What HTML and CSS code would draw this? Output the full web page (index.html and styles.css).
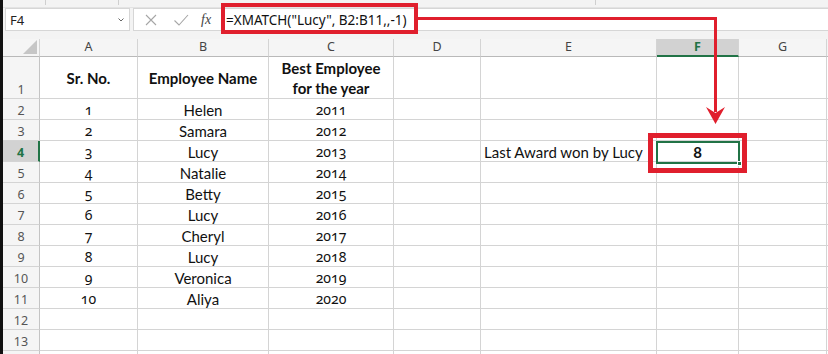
FILE: index.html
```html
<!DOCTYPE html>
<html>
<head>
<meta charset="utf-8">
<link rel="stylesheet" href="styles.css">
</head>
<body>
<div class="app">
  <div class="ribbon"><span class="rsep s1"></span><span class="rsep s2"></span><span class="rsep s3"></span></div>
  <div class="fbar">
    <div class="namebox"><span>F4</span>
      <svg class="chev" width="8" height="6" viewBox="0 0 8 6"><path d="M1.5 1.5 L4 4 L6.5 1.5" fill="none" stroke="#666" stroke-width="1"/></svg>
    </div>
    <div class="finput">
      <div class="fbtns">
        <svg width="14" height="14" viewBox="0 0 14 14"><path d="M2 2 L12 12 M12 2 L2 12" stroke="#a6a6a6" stroke-width="1.1"/></svg>
        <svg width="16" height="14" viewBox="0 0 16 14"><path d="M1.5 7.5 L6 12 L15 2" fill="none" stroke="#a6a6a6" stroke-width="1.1"/></svg>
        <span class="fx">fx</span>
      </div>
      <div class="ftext">=XMATCH("Lucy", B2:B11,,-1)</div>
    </div>
  </div>
  <div class="sheet">
    <div class="h corner"><svg width="14" height="14" viewBox="0 0 14 14"><path d="M14 0 L14 14 L0 14 Z" fill="#c6c6c6"/></svg></div>
    <div class="h">A</div><div class="h">B</div><div class="h">C</div><div class="h">D</div><div class="h">E</div><div class="h sel">F</div><div class="h">G</div><div class="h"></div>

    <div class="rh">1</div><div class="c b mid">Sr. No.</div><div class="c b mid">Employee Name</div><div class="c b mid wrap">Best Employee<br>for the year</div><div class="c"></div><div class="c"></div><div class="c"></div><div class="c"></div><div class="c"></div>

    <div class="rh">2</div><div class="c n">1</div><div class="c">Helen</div><div class="c n">2011</div><div class="c"></div><div class="c"></div><div class="c"></div><div class="c"></div><div class="c"></div>
    <div class="rh">3</div><div class="c n">2</div><div class="c">Samara</div><div class="c n">2012</div><div class="c"></div><div class="c"></div><div class="c"></div><div class="c"></div><div class="c"></div>
    <div class="rh rsel">4</div><div class="c n">3</div><div class="c">Lucy</div><div class="c n">2013</div><div class="c"></div><div class="c left">Last Award won by Lucy</div><div class="c b">8</div><div class="c"></div><div class="c"></div>
    <div class="rh">5</div><div class="c n">4</div><div class="c">Natalie</div><div class="c n">2014</div><div class="c"></div><div class="c"></div><div class="c"></div><div class="c"></div><div class="c"></div>
    <div class="rh">6</div><div class="c n">5</div><div class="c">Betty</div><div class="c n">2015</div><div class="c"></div><div class="c"></div><div class="c"></div><div class="c"></div><div class="c"></div>
    <div class="rh">7</div><div class="c n">6</div><div class="c">Lucy</div><div class="c n">2016</div><div class="c"></div><div class="c"></div><div class="c"></div><div class="c"></div><div class="c"></div>
    <div class="rh">8</div><div class="c n">7</div><div class="c">Cheryl</div><div class="c n">2017</div><div class="c"></div><div class="c"></div><div class="c"></div><div class="c"></div><div class="c"></div>
    <div class="rh">9</div><div class="c n">8</div><div class="c">Lucy</div><div class="c n">2018</div><div class="c"></div><div class="c"></div><div class="c"></div><div class="c"></div><div class="c"></div>
    <div class="rh">10</div><div class="c n">9</div><div class="c">Veronica</div><div class="c n">2019</div><div class="c"></div><div class="c"></div><div class="c"></div><div class="c"></div><div class="c"></div>
    <div class="rh">11</div><div class="c n">10</div><div class="c">Aliya</div><div class="c n">2020</div><div class="c"></div><div class="c"></div><div class="c"></div><div class="c"></div><div class="c"></div>
    <div class="rh">12</div><div class="c"></div><div class="c"></div><div class="c"></div><div class="c"></div><div class="c"></div><div class="c"></div><div class="c"></div><div class="c"></div>
    <div class="rh">13</div><div class="c"></div><div class="c"></div><div class="c"></div><div class="c"></div><div class="c"></div><div class="c"></div><div class="c"></div><div class="c"></div>
    <div class="rh"></div><div class="c"></div><div class="c"></div><div class="c"></div><div class="c"></div><div class="c"></div><div class="c"></div><div class="c"></div><div class="c"></div>
  </div>

  <div class="cellsel"><span class="handle"></span></div>
  <div class="redbox formula-box"></div>
  <div class="redbox result-box"></div>
  <svg class="arrow" width="828" height="354" viewBox="0 0 828 354">
    <path d="M415 18.5 H715.5 V112" fill="none" stroke="#e01f2d" stroke-width="3"/>
    <path d="M706 107 L715.5 124 L725 107 L715.5 113 Z" fill="#e01f2d"/>
  </svg>
</div>
</body>
</html>
```
FILE: styles.css
```css
* { box-sizing: border-box; }
html, body { margin: 0; padding: 0; background: #fff; }
body { font-family: "Lato", "Open Sans", sans-serif; }

.app {
  position: relative;
  width: 828px;
  height: 354px;
  overflow: hidden;
  border-left: 3px solid #111;
  background: #f3f3f3;
}

.ribbon {
  height: 8px;
  background: #f3f3f3;
  border-bottom: 1px solid #e3e3e3;
  position: relative;
}
.rsep { position: absolute; top: 0; width: 1px; height: 5px; background: #cfcfcf; }
.rsep.s1 { left: 42px; }
.rsep.s2 { left: 115px; }
.rsep.s3 { left: 592px; }

.fbar {
  display: flex;
  height: 23px;
  padding-left: 2px;
  gap: 3px;
}
.namebox {
  width: 125px;
  height: 23px;
  background: #fff;
  border: 1px solid #d6d6d6;
  display: flex;
  align-items: center;
  justify-content: space-between;
  padding: 0 4px;
  font-family: "Noto Sans", "Open Sans", sans-serif;
  font-size: 13px;
  color: #222;
}
.finput {
  flex: 1;
  height: 23px;
  background: #fff;
  border: 1px solid #d6d6d6;
  border-right: none;
  display: flex;
  align-items: center;
}
.fbtns {
  width: 86px;
  display: flex;
  align-items: center;
  padding-left: 10px;
  gap: 15px;
}
.fx {
  font-family: "Liberation Serif", serif;
  font-style: italic;
  font-size: 14px;
  color: #444;
  margin-left: -3px;
}
.ftext {
  font-family: "Noto Sans", "Open Sans", sans-serif;
  font-size: 13.5px;
  color: #111;
  padding-left: 6px;
  white-space: nowrap;
}

.sheet {
  margin-top: 8px;
  display: grid;
  grid-template-columns: 37px 98px 131px 125px 87px 176px 82px 88px 40px;
  grid-template-rows: 18px 42px repeat(13, 21px);
  background: #fff;
}
.h {
  background: #f5f5f5;
  border-right: 1px solid #d4d4d4;
  border-bottom: 1px solid #b9b9b9;
  font-family: "Noto Sans", "Open Sans", sans-serif;
  font-size: 12.5px;
  color: #444;
  display: flex;
  align-items: center;
  justify-content: center;
  line-height: 1;
}
.h.corner { justify-content: flex-end; align-items: flex-end; padding: 0 2px 2px 0; }
.h.sel {
  background: #d2d2d2;
  border-bottom: 2px solid #217346;
  color: #217346;
  font-weight: bold;
}
.rh {
  background: #f5f5f5;
  border-right: 1px solid #c4c4c4;
  border-bottom: 1px solid #d4d4d4;
  font-family: "Noto Sans", "Open Sans", sans-serif;
  font-size: 12.5px;
  color: #555;
  display: flex;
  align-items: flex-end;
  justify-content: center;
  padding-bottom: 2px;
  line-height: 1;
}
.rh.rsel {
  background: #d2d2d2;
  border-right: 2px solid #217346;
  color: #217346;
  font-weight: bold;
}
.c {
  border-right: 1px solid #d4d4d4;
  border-bottom: 1px solid #d4d4d4;
  font-size: 15px;
  color: #111;
  display: flex;
  align-items: flex-end;
  justify-content: center;
  line-height: 18px;
  white-space: nowrap;
}
.c.n {
  font-family: "Noto Sans", "Open Sans", sans-serif;
  font-size: 14px;
  font-variant-numeric: oldstyle-nums;
  font-feature-settings: "onum" 1;
}
.c.b { font-weight: bold; }
.c.mid { align-items: center; }
.c.wrap { text-align: center; line-height: 20px; }
.c.left { justify-content: flex-start; padding-left: 3px; }

.cellsel {
  position: absolute;
  left: 653px;
  top: 141px;
  width: 84px;
  height: 23px;
  border: 2px solid #217346;
}
.handle {
  position: absolute;
  right: -4px;
  bottom: -4px;
  width: 5px;
  height: 5px;
  background: #217346;
  border: 1px solid #fff;
}
.redbox {
  position: absolute;
  border: 4px solid #e01f2d;
}
.formula-box { left: 218px; top: 3px; width: 197px; height: 31px; }
.result-box { left: 645px; top: 133px; width: 99px; height: 40px; border-width: 5px; }
.arrow { position: absolute; left: -3px; top: 0; pointer-events: none; }
```
